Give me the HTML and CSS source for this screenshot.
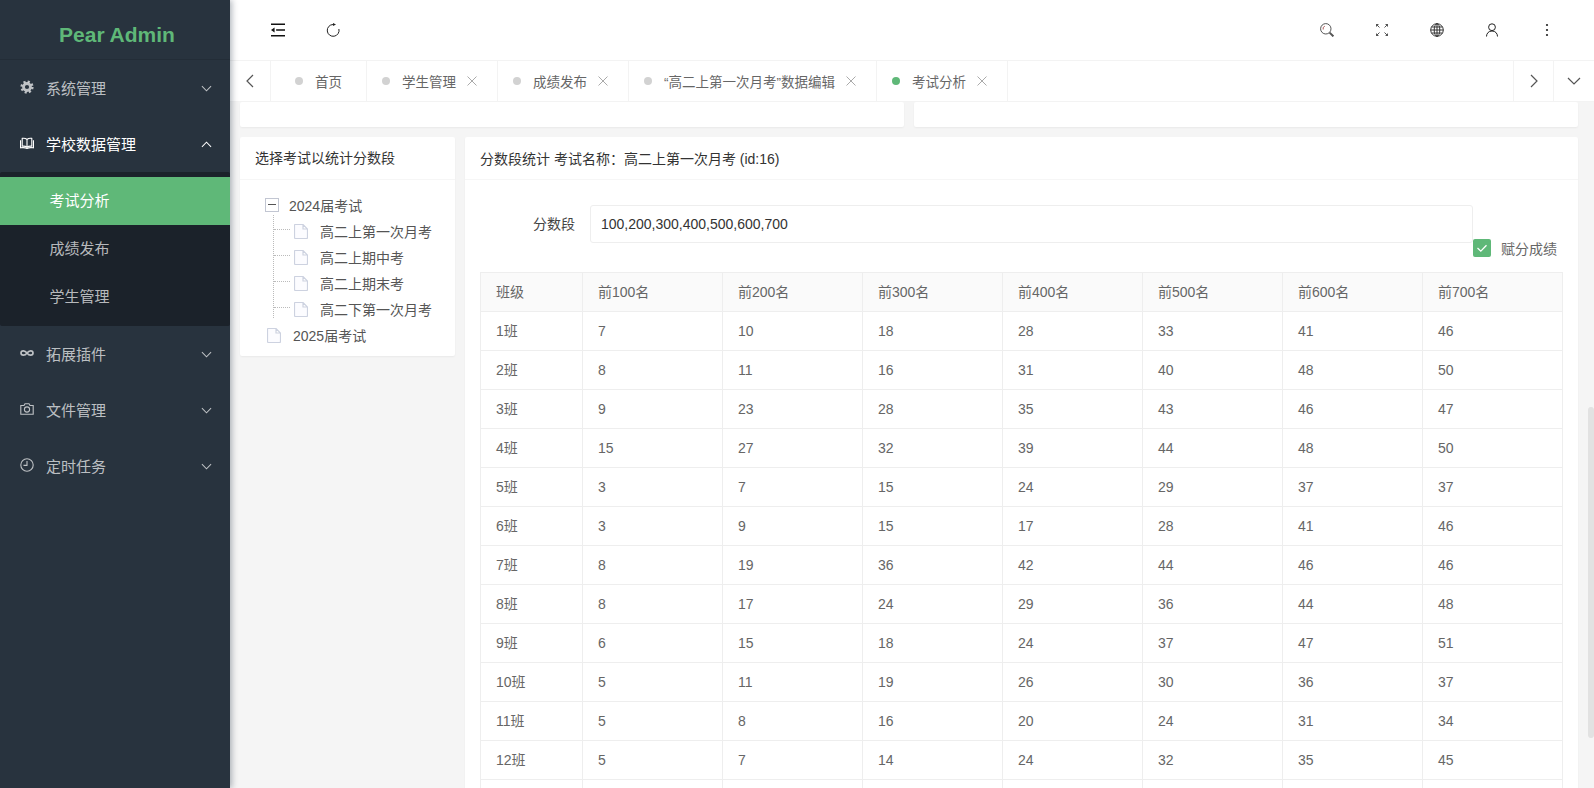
FILE: index.html
```html
<!DOCTYPE html>
<html lang="zh">
<head>
<meta charset="utf-8">
<title>Pear Admin</title>
<link rel="stylesheet" href="styles.css">
</head>
<body>
<div class="app">
  <aside class="side">
    <div class="logo">Pear Admin</div>
    <nav class="menu">
      <a class="mi">
        <svg class="mi-ic" viewBox="0 0 14 14"><circle class="ln hub" cx="7" cy="7" r="3.500"/><circle class="ln teeth" cx="7" cy="7" r="5.600"/></svg>
        <span class="mi-t">系统管理</span>
        <svg class="chev" viewBox="0 0 12 7"><path d="M1 1l5 5 5-5"/></svg>
      </a>
      <a class="mi on">
        <svg class="mi-ic" viewBox="0 0 14 14"><path class="ln" d="M7 3.500C5.800 2.400 4 2.100 2.200 2.400v7.800c1.800-.3 3.600 0 4.800 1 1.200-1 3-1.300 4.800-1V2.400C10 2.100 8.200 2.400 7 3.500zM7 3.500v7.900M.5 4.200v7.600c2.300-.3 4.800-.3 6.500.6 1.700-.9 4.200-.9 6.500-.6V4.200"/></svg>
        <span class="mi-t">学校数据管理</span>
        <svg class="chev" viewBox="0 0 12 7"><path d="M1 6l5-5 5 5"/></svg>
      </a>
      <div class="sub">
        <a class="si act">考试分析</a>
        <a class="si">成绩发布</a>
        <a class="si">学生管理</a>
      </div>
      <a class="mi">
        <svg class="mi-ic" viewBox="0 0 14 14"><path class="ln thick" d="M7 7C5.800 5.400 4.700 4.800 3.400 4.800 2 4.800 1 5.800 1 7s1 2.200 2.400 2.200C4.700 9.200 5.800 8.600 7 7c1.200-1.600 2.300-2.200 3.600-2.200C12 4.800 13 5.800 13 7s-1 2.200-2.400 2.200C9.300 9.200 8.200 8.600 7 7z"/></svg>
        <span class="mi-t">拓展插件</span>
        <svg class="chev" viewBox="0 0 12 7"><path d="M1 1l5 5 5-5"/></svg>
      </a>
      <a class="mi">
        <svg class="mi-ic" viewBox="0 0 14 14"><path class="ln" d="M.8 3.500h3.200l1-1.800h4l1 1.800h3.200v8.800H.8z"/><circle class="ln" cx="7" cy="7.500" r="2.600"/></svg>
        <span class="mi-t">文件管理</span>
        <svg class="chev" viewBox="0 0 12 7"><path d="M1 1l5 5 5-5"/></svg>
      </a>
      <a class="mi">
        <svg class="mi-ic" viewBox="0 0 14 14"><circle class="ln" cx="7" cy="7" r="6.200"/><path class="ln" d="M7 3V7.400H3.500"/></svg>
        <span class="mi-t">定时任务</span>
        <svg class="chev" viewBox="0 0 12 7"><path d="M1 1l5 5 5-5"/></svg>
      </a>
    </nav>
  </aside>

  <div class="main">
    <header class="top">
      <div class="nav">
        <span class="ni"><svg class="ic" viewBox="0 0 15 14"><path d="M0 .8h15M5.500 7h9.500M0 13.200h15" stroke="#111" stroke-width="1.500" fill="none"/><path d="M0 7l3.800-2.600v5.200z" fill="#111"/></svg></span>
        <span class="ni"><svg class="ic" viewBox="0 0 14 14"><path d="M12.900 6A5.900 5.900 0 1 1 7 1.500" stroke="#222" fill="none"/><path d="M7 0l3 1.500-3 1.500z" fill="#222"/></svg></span>
      </div>
      <div class="nav">
        <span class="ni"><svg class="ic" viewBox="0 0 14 14"><circle cx="5.800" cy="5.800" r="5.200" stroke="#555" fill="none"/><path d="M9.600 9.600l3.800 3.800" stroke="#555" stroke-width="2"/><path d="M3.200 6.500V4.500L4.800 3.200" stroke="#a55" fill="none"/></svg></span>
        <span class="ni"><svg class="ic" viewBox="0 0 14 14"><path d="M1.500 1.500l3 3M12.500 1.500l-3 3M1.500 12.500l3-3M12.500 12.500l-3-3" stroke="#555" fill="none"/><path d="M1 1h3L1 4zM13 1h-3l3 3zM1 13h3l-3-3zM13 13h-3l3-3z" fill="#555"/></svg></span>
        <span class="ni"><svg class="ic" viewBox="0 0 14 14"><g stroke="#222" fill="none" stroke-width=".9"><circle cx="7" cy="7" r="6.300"/><ellipse cx="7" cy="7" rx="2.800" ry="6.300"/><path d="M7 .7v12.600M.7 7h12.600M1.500 4h11M1.500 10h11"/></g></svg></span>
        <span class="ni"><svg class="ic" viewBox="0 0 14 14"><circle cx="7" cy="4.200" r="3.400" stroke="#222" fill="none"/><path d="M1.500 13.500C1.500 10.500 3.500 8 7 8s5.500 2.500 5.500 5.500" stroke="#222" fill="none"/></svg></span>
        <span class="ni"><svg class="ic" viewBox="0 0 14 14"><g fill="#222"><circle cx="7" cy="2" r="1.100"/><circle cx="7" cy="7" r="1.100"/><circle cx="7" cy="12" r="1.100"/></g></svg></span>
      </div>
    </header>

    <div class="tabs">
      <span class="tbtn first"><svg class="arr" viewBox="0 0 8 14"><path d="M7 1L1 7l6 6"/></svg></span>
      <div class="tlist">
        <span class="tab home"><i class="dot"></i>首页</span>
        <span class="tab"><i class="dot"></i>学生管理<svg class="x" viewBox="0 0 10 10"><path d="M.5 .5l9 9M9.500 .5l-9 9"/></svg></span>
        <span class="tab"><i class="dot"></i>成绩发布<svg class="x" viewBox="0 0 10 10"><path d="M.5 .5l9 9M9.500 .5l-9 9"/></svg></span>
        <span class="tab"><i class="dot"></i>“高二上第一次月考”数据编辑<svg class="x" viewBox="0 0 10 10"><path d="M.5 .5l9 9M9.500 .5l-9 9"/></svg></span>
        <span class="tab"><i class="dot live"></i>考试分析<svg class="x" viewBox="0 0 10 10"><path d="M.5 .5l9 9M9.500 .5l-9 9"/></svg></span>
      </div>
      <span class="tbtn"><svg class="arr" viewBox="0 0 8 14"><path d="M1 1l6 6-6 6"/></svg></span>
      <span class="tbtn"><svg class="arr wide" viewBox="0 0 14 8"><path d="M1 1l6 6 6-6"/></svg></span>
    </div>

    <main class="view">
      <div class="row top-row">
        <div class="card stub"></div>
        <div class="card stub"></div>
      </div>
      <div class="row">
        <section class="card tree-card">
          <div class="card-h">选择考试以统计分数段</div>
          <div class="tree">
            <div class="node root"><i class="minus"></i><span class="lbl-a">2024届考试</span></div>
            <div class="kids">
              <div class="node kid"><svg class="doc" viewBox="0 0 14 15"><path d="M1 .5h8l4.500 4.500v8.500a1 1 0 0 1-1 1H1.500a1 1 0 0 1-1-1v-12a1 1 0 0 1 .5-1zM9 .5V5h4.500"/></svg><span class="lbl-k">高二上第一次月考</span></div>
              <div class="node kid"><svg class="doc" viewBox="0 0 14 15"><path d="M1 .5h8l4.500 4.500v8.500a1 1 0 0 1-1 1H1.500a1 1 0 0 1-1-1v-12a1 1 0 0 1 .5-1zM9 .5V5h4.500"/></svg><span class="lbl-k">高二上期中考</span></div>
              <div class="node kid"><svg class="doc" viewBox="0 0 14 15"><path d="M1 .5h8l4.500 4.500v8.500a1 1 0 0 1-1 1H1.500a1 1 0 0 1-1-1v-12a1 1 0 0 1 .5-1zM9 .5V5h4.500"/></svg><span class="lbl-k">高二上期末考</span></div>
              <div class="node kid"><svg class="doc" viewBox="0 0 14 15"><path d="M1 .5h8l4.500 4.500v8.500a1 1 0 0 1-1 1H1.500a1 1 0 0 1-1-1v-12a1 1 0 0 1 .5-1zM9 .5V5h4.500"/></svg><span class="lbl-k">高二下第一次月考</span></div>
            </div>
            <div class="node root2"><svg class="doc" viewBox="0 0 14 15"><path d="M1 .5h8l4.500 4.500v8.500a1 1 0 0 1-1 1H1.500a1 1 0 0 1-1-1v-12a1 1 0 0 1 .5-1zM9 .5V5h4.500"/></svg><span class="lbl-b">2025届考试</span></div>
          </div>
        </section>
        <section class="card stat-card">
          <div class="card-h">分数段统计 考试名称<span class="colon">：</span>高二上第一次月考 (id:16)</div>
          <div class="stat-body">
            <div class="form">
              <label class="f-label">分数段</label>
              <input class="f-input" type="text" value="100,200,300,400,500,600,700">
              <span class="check"><i class="box"><svg viewBox="0 0 18 18"><path d="M4.500 9l3.300 3.200 5.700-6"/></svg></i>赋分成绩</span>
            </div>
            <table class="grid">
              <thead>
                <tr><th class="c0">班级</th><th>前100名</th><th>前200名</th><th>前300名</th><th>前400名</th><th>前500名</th><th>前600名</th><th>前700名</th></tr>
              </thead>
              <tbody>
                <tr><td>1班</td><td>7</td><td>10</td><td>18</td><td>28</td><td>33</td><td>41</td><td>46</td></tr>
                <tr><td>2班</td><td>8</td><td>11</td><td>16</td><td>31</td><td>40</td><td>48</td><td>50</td></tr>
                <tr><td>3班</td><td>9</td><td>23</td><td>28</td><td>35</td><td>43</td><td>46</td><td>47</td></tr>
                <tr><td>4班</td><td>15</td><td>27</td><td>32</td><td>39</td><td>44</td><td>48</td><td>50</td></tr>
                <tr><td>5班</td><td>3</td><td>7</td><td>15</td><td>24</td><td>29</td><td>37</td><td>37</td></tr>
                <tr><td>6班</td><td>3</td><td>9</td><td>15</td><td>17</td><td>28</td><td>41</td><td>46</td></tr>
                <tr><td>7班</td><td>8</td><td>19</td><td>36</td><td>42</td><td>44</td><td>46</td><td>46</td></tr>
                <tr><td>8班</td><td>8</td><td>17</td><td>24</td><td>29</td><td>36</td><td>44</td><td>48</td></tr>
                <tr><td>9班</td><td>6</td><td>15</td><td>18</td><td>24</td><td>37</td><td>47</td><td>51</td></tr>
                <tr><td>10班</td><td>5</td><td>11</td><td>19</td><td>26</td><td>30</td><td>36</td><td>37</td></tr>
                <tr><td>11班</td><td>5</td><td>8</td><td>16</td><td>20</td><td>24</td><td>31</td><td>34</td></tr>
                <tr><td>12班</td><td>5</td><td>7</td><td>14</td><td>24</td><td>32</td><td>35</td><td>45</td></tr>
                <tr><td>&nbsp;</td><td></td><td></td><td></td><td></td><td></td><td></td><td></td></tr>
              </tbody>
            </table>
          </div>
        </section>
      </div>
      <div class="thumb"></div>
    </main>
  </div>
</div>
</body>
</html>
```
FILE: styles.css
```css
* { box-sizing: border-box; }
html, body { margin: 0; height: 100%; overflow: hidden; }
body {
  font-family: "Liberation Sans", "Noto Sans CJK SC", sans-serif;
  font-size: 14px;
  color: #666;
  background: #fff;
}
.app { display: flex; height: 788px; }

/* sidebar */
.side {
  width: 230px;
  flex: none;
  background: #28333e;
  box-shadow: 2px 0 6px rgba(0, 21, 41, .3);
  position: relative;
  z-index: 3;
  color: rgba(255, 255, 255, .7);
}
.logo {
  height: 60px;
  text-align: center;
  font-size: 21px;
  font-weight: bold;
  color: #5fb878;
  line-height: 70px;
  border-bottom: 1px solid #232d37;
  padding-left: 4px;
}
.mi {
  display: flex;
  align-items: center;
  height: 56px;
  padding: 0 18px 0 20px;
  font-size: 15px;
}
.mi.on { color: #fff; }
.mi-ic { width: 14px; height: 14px; flex: none; margin: 0 12px 2px 0; }
.ln { fill: none; stroke: currentColor; stroke-width: 1.1; }
.ln.thick { stroke-width: 1.7; }
.ln.hub { stroke-width: 2.800; }
.ln.teeth { stroke-width: 2; stroke-dasharray: 2.200 2.200; }
.mi-t { flex: 1; padding-bottom: 2px; }
.chev { width: 11px; height: 7px; fill: none; stroke: currentColor; stroke-width: 1.100; }
.sub { background: #1b222a; padding: 5px 0; border-radius: 2px; }
.si { display: block; height: 48px; line-height: 48px; padding-left: 49.500px; font-size: 15px; }
.si.act { background: #5fb878; color: #fff; }

/* main column */
.main { flex: 1; min-width: 0; display: flex; flex-direction: column; }
.top { height: 60px; flex: none; display: flex; justify-content: space-between; padding: 0 20px; }
.nav { display: flex; }
.ni { width: 55px; display: flex; align-items: center; justify-content: center; }
.ic { width: 14px; height: 14px; }

/* tabs */
.tabs {
  height: 42px;
  flex: none;
  display: flex;
  border-top: 1px solid #f3f3f3;
  border-bottom: 1px solid #f3f3f3;
  font-size: 13.500px;
  color: #666;
}
.tbtn {
  width: 40px;
  display: flex;
  align-items: center;
  justify-content: center;
  border-left: 1px solid #f3f3f3;
}
.tbtn:last-child { width: 41px; }
.tbtn.first { border-left: 0; }
.arr { width: 8px; height: 14px; fill: none; stroke: #555; stroke-width: 1.200; }
.arr.wide { width: 14px; height: 8px; }
.tlist { flex: 1; display: flex; min-width: 0; }
.tab {
  display: flex;
  align-items: center;
  padding: 0 20px 0 15px;
  border-left: 1px solid #f3f3f3;
}
.tab:last-child { border-right: 1px solid #f3f3f3; }
.tab.home { padding: 0 24px; }
.dot { width: 8px; height: 8px; border-radius: 50%; background: #d2d2d2; margin-right: 12px; flex: none; }
.dot.live { background: #5fb878; }
.x { width: 10px; height: 10px; margin-left: 11px; fill: none; stroke: #aaa; }

/* content */
.view {
  flex: 1;
  min-height: 0;
  overflow: hidden;
  position: relative;
  background: #f5f5f5;
  padding: 0 16px 0 10px;
}
.row { display: flex; gap: 10px; align-items: flex-start; margin-bottom: 10px; }
.top-row { height: 25px; }
.card { background: #fff; border-radius: 2px; box-shadow: 0 1px 2px rgba(0, 0, 0, .05); }
.stub { flex: 1; height: 25px; }
.card-h {
  height: 43px;
  line-height: 42px;
  padding: 0 15px;
  color: #333;
  border-bottom: 1px solid #f6f6f6;
}
.colon { font-family: "Noto Sans CJK TC", sans-serif; }
.tree-card { width: 215px; flex: none; }
.tree { padding: 12px 0 8px 25px; color: #555; position: relative; }
.node { display: flex; align-items: center; height: 26px; }
.minus {
  width: 14px;
  height: 14px;
  border: 1px solid #c2c6d2;
  margin-right: 10px;
  position: relative;
  flex: none;
}
.minus::before { content: ""; position: absolute; left: 2px; right: 2px; top: 5px; height: 1px; background: #555; }
.kids { position: relative; padding-left: 29px; }
.kids::before { content: ""; position: absolute; left: 8px; top: -3px; bottom: 4px; border-left: 1px dotted #bbb; }
.kid { position: relative; }
.kid::before { content: ""; position: absolute; left: -20px; width: 16px; top: 11px; border-top: 1px dotted #bbb; }
.doc { width: 14px; height: 15px; flex: none; fill: #fcfcff; stroke: #cdd2e0; stroke-width: 1.200; }
.lbl-k { margin-left: 12px; }
.root2 { padding-left: 2px; }
.lbl-b { margin-left: 12px; }
.stat-card { flex: 1; min-width: 0; }
.stat-body { padding: 25px 15px 0; }
.form { display: grid; grid-template-columns: 110px 1fr 90px; margin-bottom: 15px; align-items: start; }
.f-label { height: 38px; line-height: 38px; text-align: right; padding-right: 15px; color: #444; }
.f-input {
  height: 38px;
  width: 100%;
  border: 1px solid #eee;
  border-radius: 3px;
  padding: 0 10px;
  font: inherit;
  color: #333;
  outline: 0;
}
.check { display: flex; align-items: center; margin-top: 34px; height: 18px; color: #666; }
.box { width: 18px; height: 18px; border-radius: 2px; background: #5fb878; margin-right: 10px; flex: none; display: block; }
.box svg { display: block; width: 18px; height: 18px; fill: none; stroke: #fff; stroke-width: 1.300; }
.grid { border-collapse: collapse; table-layout: fixed; width: 1082px; color: #666; }
.grid th, .grid td {
  border: 1px solid #eee;
  padding: 9px 15px;
  line-height: 20px;
  font-weight: normal;
  text-align: left;
  width: 140px;
}
.grid th { background: #fafafa; }
.grid th.c0 { width: 102px; }
.thumb {
  position: absolute;
  right: 0;
  top: 305px;
  width: 6px;
  height: 331px;
  background: #e2e2e2;
  border-radius: 3px;
}
```
